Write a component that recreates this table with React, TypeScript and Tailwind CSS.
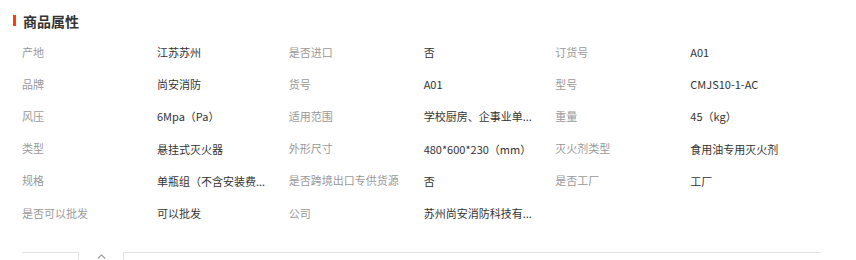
import React from 'react';

type Attr = { label: string; value: string };

const attrs: Attr[] = [
  { label: '产地', value: '江苏苏州' },
  { label: '是否进口', value: '否' },
  { label: '订货号', value: 'A01' },
  { label: '品牌', value: '尚安消防' },
  { label: '货号', value: 'A01' },
  { label: '型号', value: 'CMJS10-1-AC' },
  { label: '风压', value: '6Mpa（Pa）' },
  { label: '适用范围', value: '学校厨房、企事业单位食堂' },
  { label: '重量', value: '45（kg）' },
  { label: '类型', value: '悬挂式灭火器' },
  { label: '外形尺寸', value: '480*600*230（mm）' },
  { label: '灭火剂类型', value: '食用油专用灭火剂' },
  { label: '规格', value: '单瓶组（不含安装费用）' },
  { label: '是否跨境出口专供货源', value: '否' },
  { label: '是否工厂', value: '工厂' },
  { label: '是否可以批发', value: '可以批发' },
  { label: '公司', value: '苏州尚安消防科技有限公司' },
];

// rough width: CJK counts 1, latin counts half
const width = (s: string) =>
  [...s].reduce((w, c) => w + (c.charCodeAt(0) > 0x2e80 ? 1 : 0.5), 0);

const shorten = (s: string) => (width(s) > 10 ? [...s].slice(0, 9).join('') + '...' : s);

const App: React.FC = () => {
  return (
    <div
      className="w-[856px] h-[260px] bg-white overflow-hidden"
      style={{ fontFamily: '"Noto Sans CJK SC", "Liberation Sans", sans-serif' }}
    >
      {/* Title */}
      <div className="flex items-center h-[21px] mt-[10px] pl-[13px]">
        <span className="w-[3px] h-[11px] bg-[#ff4000]" />
        <h2 className="ml-[7px] text-[14px] font-bold text-[#333] leading-none">商品属性</h2>
      </div>

      {/* Attributes */}
      <div className="grid grid-cols-3 w-[800px] ml-[22px] mt-[5px]">
        {attrs.map((a) => (
          <div key={a.label} className="flex items-center h-[32.2px] text-[11px] leading-none">
            <span className="w-[135px] shrink-0 text-[#999] whitespace-nowrap">{a.label}</span>
            <span className="text-[#333] whitespace-nowrap leading-[16px]" title={a.value}>
              {shorten(a.value)}
            </span>
          </div>
        ))}
      </div>

      {/* Collapse toggle */}
      <div className="flex ml-[22px] w-[799px] mt-[23px] h-[20px]">
        <div className="w-[56px] border-t border-[#e3e3e3]" />
        <button className="w-[46px] border-x border-[#e3e3e3] flex justify-center pt-[2px]">
          <svg width="9" height="5" viewBox="0 0 9 5" fill="none">
            <path d="M0.8 4.5 L4.5 0.9 L8.2 4.5" stroke="#999" strokeWidth="1.1" />
          </svg>
        </button>
        <div className="flex-1 border-t border-[#e3e3e3]" />
      </div>
    </div>
  );
};

export default App;
